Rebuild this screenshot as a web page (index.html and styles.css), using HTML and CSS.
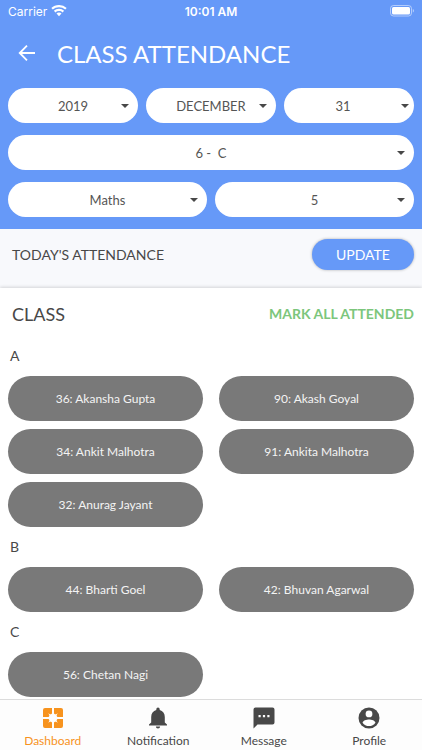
FILE: index.html
```html
<!DOCTYPE html>
<html lang="en">
<head>
<meta charset="UTF-8">
<meta name="viewport" content="width=device-width, initial-scale=1.0">
<title>Class Attendance</title>
<link rel="stylesheet" href="styles.css">
</head>
<body>

<header class="header">
  <div class="status-bar">
    <div class="carrier">
      <span>Carrier</span>
      <svg width="16" height="12" viewBox="0 0 16 12" fill="#fff" aria-hidden="true">
        <path d="M8 0C5 0 2.300 1.100.3 3l1.500 1.600A9 9 0 0 1 8 2.200a9 9 0 0 1 6.200 2.400L15.700 3A11.200 11.200 0 0 0 8 0z"/>
        <path d="M8 3.800c-2 0-3.800.8-5.100 2l1.500 1.600A5.200 5.200 0 0 1 8 6c1.400 0 2.600.5 3.600 1.400l1.500-1.600A7.400 7.400 0 0 0 8 3.800z"/>
        <path d="M8 7.500c-1 0-1.900.4-2.500 1L8 11.200l2.500-2.700c-.6-.6-1.500-1-2.500-1z"/>
      </svg>
    </div>
    <span class="time">10:01 AM</span>
    <div class="battery">
      <svg width="24" height="12" viewBox="0 0 24 12" aria-hidden="true">
        <rect x="0.500" y="0.500" width="21" height="10.500" rx="3" fill="none" stroke="#fff" stroke-opacity=".5"/>
        <rect x="2" y="2" width="18" height="7.500" rx="1.500" fill="#fff"/>
        <path d="M22.800 4v3.600c.8-.3 1.200-1 1.200-1.800S23.600 4.300 22.800 4z" fill="#fff" fill-opacity=".5"/>
      </svg>
    </div>
  </div>

  <div class="title-bar">
    <button class="back" type="button" aria-label="Back">
      <svg width="24" height="24" viewBox="0 0 24 24" aria-hidden="true">
        <path d="M20 12H5M12 4.700 4.700 12l7.300 7.300" fill="none" stroke="#fff" stroke-width="1.800"/>
      </svg>
    </button>
    <h1>CLASS ATTENDANCE</h1>
  </div>

  <form class="filters">
    <div class="filter-row">
      <div class="select"><select aria-label="Year"><option>2019</option></select></div>
      <div class="select"><select aria-label="Month"><option>DECEMBER</option></select></div>
      <div class="select select-day"><select aria-label="Day"><option>31</option></select></div>
    </div>
    <div class="filter-row">
      <div class="select"><select aria-label="Class"><option>6 -&nbsp; C</option></select></div>
    </div>
    <div class="filter-row">
      <div class="select"><select aria-label="Subject"><option>Maths</option></select></div>
      <div class="select"><select aria-label="Period"><option>5</option></select></div>
    </div>
  </form>
</header>

<section class="update-bar">
  <h2>TODAY'S ATTENDANCE</h2>
  <button class="update" type="button">UPDATE</button>
</section>

<main class="class-list">
  <div class="class-header">
    <h2>CLASS</h2>
    <button class="mark-all" type="button">MARK ALL ATTENDED</button>
  </div>

  <h3>A</h3>
  <div class="students">
    <button class="student" type="button">36: Akansha Gupta</button>
    <button class="student" type="button">90: Akash Goyal</button>
    <button class="student" type="button">34: Ankit Malhotra</button>
    <button class="student" type="button">91: Ankita Malhotra</button>
    <button class="student" type="button">32: Anurag Jayant</button>
  </div>

  <h3>B</h3>
  <div class="students">
    <button class="student" type="button">44: Bharti Goel</button>
    <button class="student" type="button">42: Bhuvan Agarwal</button>
  </div>

  <h3>C</h3>
  <div class="students">
    <button class="student" type="button">56: Chetan Nagi</button>
  </div>
</main>

<nav class="tabs">
  <a class="tab active" href="#dashboard">
    <svg width="24" height="24" viewBox="0 0 24 24" fill="currentColor" aria-hidden="true">
      <path d="M4 2h7v5.500L9.700 8.800 7.200 7.200l1.600 2.500L7.500 11H2V4a2 2 0 0 1 2-2z"/>
      <path d="M13 2h7a2 2 0 0 1 2 2v7h-5.500l-1.300-1.300 1.600-2.500-2.500 1.600L13 7.500z"/>
      <path d="M2 13h5.500l1.300 1.300-1.600 2.500 2.500-1.600 1.300 1.300V22H4a2 2 0 0 1-2-2z"/>
      <path d="M22 13h-5.500l-1.300 1.300 1.600 2.500-2.500-1.600-1.300 1.300V22h7a2 2 0 0 0 2-2z"/>
      <rect x="8.500" y="8.500" width="7" height="7" fill="#fdfdfd"/>
    </svg>
    <span>Dashboard</span>
  </a>
  <a class="tab" href="#notification">
    <svg width="24" height="24" viewBox="0 0 24 24" fill="currentColor" aria-hidden="true">
      <path d="M12 22.500c1.200 0 2.100-.9 2.100-2H9.900c0 1.100.9 2 2.100 2zM18.800 16.500v-5.600c0-3.400-1.900-6.200-5.100-7V3.200a1.700 1.700 0 0 0-3.400 0v.7c-3.200.8-5.100 3.600-5.100 7v5.600L3 18.600v1h18v-1z"/>
    </svg>
    <span>Notification</span>
  </a>
  <a class="tab" href="#message">
    <svg width="24" height="24" viewBox="0 0 24 24" fill="currentColor" aria-hidden="true">
      <path fill-rule="evenodd" d="M3.500 1.500h17a2 2 0 0 1 2 2v13a2 2 0 0 1-2 2H5.500l-4 4v-19a2 2 0 0 1 2-2zM6.500 9v2.200h2.200V9zm4.400 0v2.200h2.200V9zm4.400 0v2.200h2.200V9z"/>
    </svg>
    <span>Message</span>
  </a>
  <a class="tab" href="#profile">
    <svg width="24" height="24" viewBox="0 0 24 24" aria-hidden="true">
      <circle cx="12" cy="12" r="10.500" fill="currentColor"/>
      <circle cx="12" cy="7.900" r="3.400" fill="#fff"/>
      <path d="M12 13.400c-2.300 0-6.400 1.200-6.400 3.300a7.700 7.700 0 0 0 12.800 0c0-2.100-4.100-3.300-6.400-3.300z" fill="#fff"/>
    </svg>
    <span>Profile</span>
  </a>
</nav>

</body>
</html>
```
FILE: styles.css
```css
* {
  box-sizing: border-box;
}

body {
  display: flex;
  flex-direction: column;
  height: 100vh;
  margin: 0;
  background-color: #fff;
  color: #484848;
  font-family: Lato, sans-serif;
}

h1, h2, h3 {
  margin: 0;
  font-weight: normal;
}

button, select {
  margin: 0;
  padding: 0;
  border: none;
  background: none;
  font-family: inherit;
  cursor: pointer;
}

.header {
  padding: 0 8px 12px;
  background-color: #6699f8;
  color: #fff;
}

.status-bar {
  display: grid;
  grid-template-columns: 1fr auto 1fr;
  align-items: center;
  height: 22px;
  font-family: Inter, sans-serif;
  font-size: 12px;
}

.carrier {
  display: flex;
  align-items: center;
  gap: 4px;
}

.time {
  font-weight: 600;
}

.battery {
  display: flex;
  justify-content: flex-end;
}

.title-bar {
  display: flex;
  align-items: center;
  gap: 18px;
  height: 66px;
  padding: 0 0 4px 7px;
}

.title-bar h1 {
  font-size: 24px;
}

.back {
  display: flex;
}

.filters {
  display: flex;
  flex-direction: column;
  gap: 12px;
}

.filter-row {
  display: flex;
  gap: 8px;
}

.select {
  position: relative;
  flex: 1;
}

.select::after {
  content: "";
  position: absolute;
  top: 16px;
  right: 9px;
  border: 4px solid transparent;
  border-top-color: #484848;
  border-bottom: none;
  pointer-events: none;
}

.select select {
  display: block;
  width: 100%;
  height: 35px;
  border-radius: 18px;
  background-color: #fff;
  color: #555;
  font-size: 13px;
  text-align: center;
  text-align-last: center;
  appearance: none;
}

.select-day::after {
  right: 5px;
}

.select-day select {
  padding-right: 12px;
}

.update-bar {
  display: flex;
  align-items: flex-start;
  justify-content: space-between;
  height: 59px;
  padding: 10px 8px 0 12px;
  background-color: #f8f9fc;
}

.update-bar h2 {
  font-size: 14px;
  line-height: 31px;
}

.update {
  width: 102px;
  height: 31px;
  border-radius: 16px;
  background-color: #6699f8;
  box-shadow: 0 0 3px rgba(0, 0, 0, 0.3);
  color: #fff;
  font-size: 14px;
}

.class-list {
  flex: 1;
  min-height: 0;
  overflow: hidden;
  padding: 0 8px;
  box-shadow: 0 -1px 3px rgba(0, 0, 0, 0.15);
}

.class-header {
  display: flex;
  align-items: center;
  justify-content: space-between;
  height: 48px;
  padding: 3px 0 0 4px;
}

.class-header h2 {
  font-size: 18px;
}

.mark-all {
  color: #7cc67c;
  font-size: 14px;
  font-weight: bold;
}

.class-list h3 {
  padding-left: 2px;
  font-size: 14px;
  line-height: 40px;
}

.students {
  display: grid;
  grid-template-columns: 1fr 1fr;
  gap: 8px 16px;
}

.student {
  height: 45px;
  border-radius: 23px;
  background-color: #797979;
  color: #f4f4f4;
  font-size: 12px;
}

.tabs {
  display: flex;
  height: 51px;
  border-top: 1px solid #dcdcdc;
  background-color: #fdfdfd;
}

.tab {
  display: flex;
  flex: 1;
  flex-direction: column;
  align-items: center;
  gap: 3px;
  padding-top: 6px;
  color: #484848;
  font-size: 12px;
  line-height: 16px;
  text-decoration: none;
}

.active {
  color: #f7931e;
}
```
